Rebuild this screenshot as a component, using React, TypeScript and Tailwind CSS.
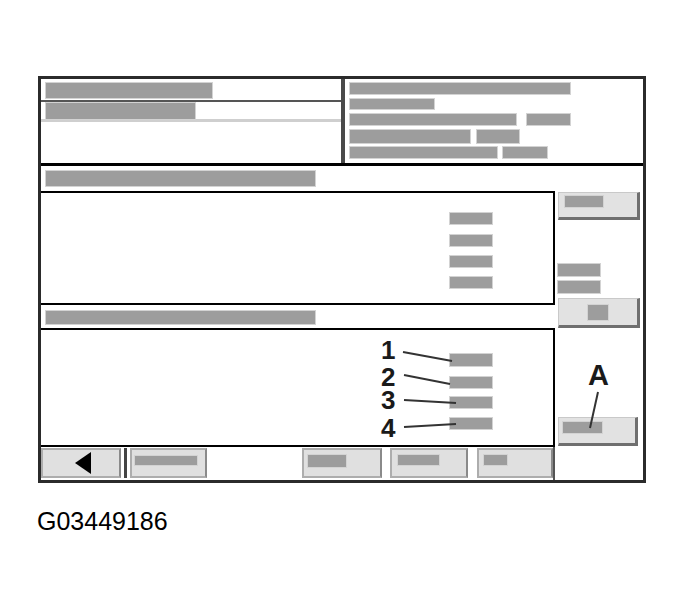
const Bar = ({ className = '' }: { className?: string }) => (
  <div className={`bg-[#9d9d9d] shadow-[0_0_0_1px_#d3d3d3] ${className}`} />
);

const SideButton = ({ className = '', children }: { className?: string; children?: React.ReactNode }) => (
  <div
    className={`bg-[#e2e2e2] border-t border-l border-[#c9c9c9] border-r-[3px] border-b-[3px] border-r-[#6f6f6f] border-b-[#6f6f6f] ${className}`}
  >
    {children}
  </div>
);

const BottomButton = ({ className = '', children }: { className?: string; children?: React.ReactNode }) => (
  <div className={`h-full bg-[#e0e0e0] border-2 border-[#adadad] border-r-[#8a8a8a] ${className}`}>{children}</div>
);

const App = () => {
  return (
    <div className="min-h-screen bg-white pt-[76px] pl-[38px] font-['Liberation_Sans',Arial,sans-serif]">
      {/* Screen frame */}
      <div className="w-[608px] h-[407px] border-[3px] border-[#2b2b2b] flex flex-col">
        {/* Top section */}
        <div className="flex h-[84px]">
          <div className="w-[300px] flex flex-col">
            <div className="h-[23px] pl-[5px] pt-[4px] border-b-2 border-[#555]">
              <Bar className="w-[166px] h-[15px]" />
            </div>
            <div className="h-[20px] pl-[5px] pt-px border-b-[3px] border-[#cfcfcf]">
              <Bar className="w-[149px] h-[16px]" />
            </div>
          </div>
          <div className="w-[4px] bg-[#4a4a4a]" />
          <div className="flex-1 flex flex-col pl-[5px] pt-[4px]">
            <Bar className="w-[220px] h-[11px]" />
            <Bar className="w-[84px] h-[10px] mt-[5px]" />
            <div className="flex gap-[11px] mt-[5px]">
              <Bar className="w-[166px] h-[11px]" />
              <Bar className="w-[43px] h-[11px]" />
            </div>
            <div className="flex gap-[7px] mt-[5px]">
              <Bar className="w-[120px] h-[13px]" />
              <Bar className="w-[42px] h-[13px]" />
            </div>
            <div className="flex gap-[6px] mt-[4px]">
              <Bar className="w-[147px] h-[11px]" />
              <Bar className="w-[44px] h-[11px]" />
            </div>
          </div>
        </div>
        <div className="h-[3px] bg-black" />

        {/* Header 1 */}
        <div className="h-[25px] pl-[5px] pt-[5px]">
          <Bar className="w-[269px] h-[15px]" />
        </div>

        <div className="flex h-[289px]">
          {/* Left column */}
          <div className="w-[514px] flex flex-col">
            <div className="h-[114px] border-t-2 border-b-2 border-r-2 border-black flex flex-col items-end pr-[61px] pt-[20px]">
              <Bar className="w-[42px] h-[11px]" />
              <Bar className="w-[42px] h-[11px] mt-[11px]" />
              <Bar className="w-[42px] h-[11px] mt-[10px]" />
              <Bar className="w-[42px] h-[11px] mt-[10px]" />
            </div>

            <div className="h-[23px] pl-[5px] pt-[6px]">
              <Bar className="w-[269px] h-[13px]" />
            </div>

            <div className="relative h-[119px] border-t-2 border-b-2 border-r-2 border-black flex flex-col items-end pr-[61px] pt-[24px]">
              <Bar className="w-[42px] h-[12px]" />
              <Bar className="w-[42px] h-[11px] mt-[11px]" />
              <Bar className="w-[42px] h-[11px] mt-[9px]" />
              <Bar className="w-[42px] h-[11px] mt-[10px]" />

              {/* Callouts */}
              <svg className="absolute inset-0 w-full h-full pointer-events-none" viewBox="0 0 512 115">
                <g stroke="#333" strokeWidth="2" fill="none">
                  <line x1="362" y1="22" x2="411" y2="31" />
                  <line x1="363" y1="45" x2="409" y2="54" />
                  <line x1="363" y1="70" x2="415" y2="73" />
                  <line x1="363" y1="97" x2="415" y2="94" />
                </g>
              </svg>
              <span className="absolute left-[340px] top-[10px] text-[26px] leading-[20px] font-bold text-[#1a1a1a]">1</span>
              <span className="absolute left-[340px] top-[37px] text-[26px] leading-[20px] font-bold text-[#1a1a1a]">2</span>
              <span className="absolute left-[340px] top-[60px] text-[26px] leading-[20px] font-bold text-[#1a1a1a]">3</span>
              <span className="absolute left-[340px] top-[88px] text-[26px] leading-[20px] font-bold text-[#1a1a1a]">4</span>
            </div>

            {/* Bottom button row */}
            <div className="flex h-[33px] pt-px pb-[2px] border-r-2 border-[#555]">
              <BottomButton className="w-[80px] flex items-center justify-center">
                <svg width="16" height="22" viewBox="0 0 16 22" className="ml-[4px]">
                  <polygon points="0,11 16,0 16,22" fill="#000" />
                </svg>
              </BottomButton>
              <div className="w-[3px]" />
              <div className="w-[3px] bg-[#444]" />
              <div className="w-[3px]" />
              <BottomButton className="w-[77px] pl-[3px] pt-[6px]">
                <Bar className="w-[62px] h-[9px]" />
              </BottomButton>
              <div className="w-[95px]" />
              <BottomButton className="w-[80px] pl-[4px] pt-[5px]">
                <Bar className="w-[38px] h-[12px]" />
              </BottomButton>
              <div className="w-[8px]" />
              <BottomButton className="w-[78px] pl-[6px] pt-[5px]">
                <Bar className="w-[41px] h-[10px]" />
              </BottomButton>
              <div className="w-[9px]" />
              <BottomButton className="w-[76px] pl-[5px] pt-[5px]">
                <Bar className="w-[23px] h-[10px]" />
              </BottomButton>
            </div>
          </div>

          {/* Right column */}
          <div className="relative flex-1 flex flex-col pl-[3px]">
            <SideButton className="w-[82px] h-[28px] mt-px pl-[6px] pt-[3px]">
              <Bar className="w-[38px] h-[11px]" />
            </SideButton>
            <Bar className="w-[42px] h-[12px] mt-[44px]" />
            <Bar className="w-[42px] h-[12px] mt-[5px]" />
            <SideButton className="w-[82px] h-[30px] mt-[5px] flex items-center justify-center">
              <Bar className="w-[20px] h-[15px]" />
            </SideButton>
            <SideButton className="w-[80px] h-[29px] mt-[89px] pl-[4px] pt-[4px]">
              <Bar className="w-[39px] h-[11px]" />
            </SideButton>

            {/* Callout A */}
            <span className="absolute left-[33px] top-[170px] text-[29px] leading-none font-bold text-[#1a1a1a]">A</span>
            <svg className="absolute inset-0 w-full h-full pointer-events-none" viewBox="0 0 88 289">
              <line x1="43" y1="201" x2="35" y2="237" stroke="#333" strokeWidth="2" />
            </svg>
          </div>
        </div>
      </div>

      {/* Figure code */}
      <div className="mt-[26px] -ml-px text-[25px] leading-none text-black">G03449186</div>
    </div>
  );
};

export default App;
